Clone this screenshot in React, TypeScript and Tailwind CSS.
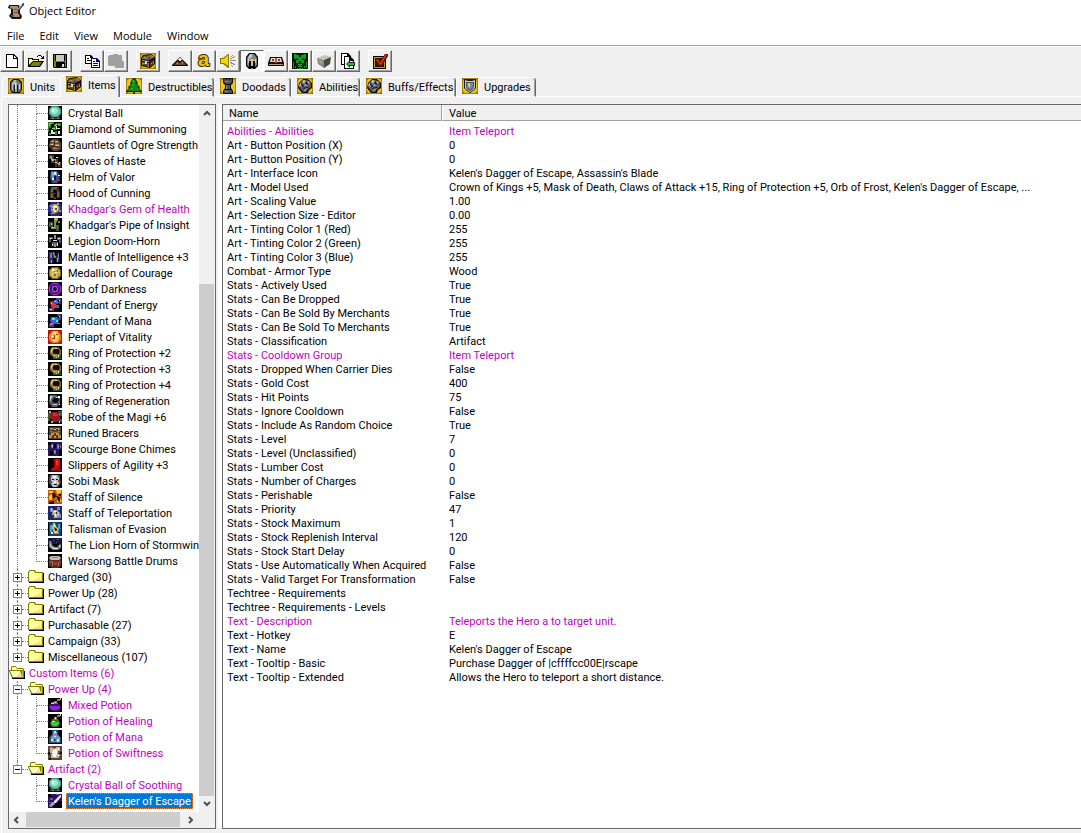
import { useState, type ReactNode } from "react";
import clsx from "clsx";

type Layer = [fill: string, d: string];

// 14x14 item icons, painted back to front on black
const art: Record<string, Layer[]> = {
  ball: [
    ["#24402c", "M2 10h10v3H2z"],
    ["#3d9c84", "M4 0h6l3 3v5l-3 3H4L1 8V3z"],
    ["#6fc9ae", "M4 1h5l3 3v3l-3 3H5L2 7V3z"],
    ["#a4e4cc", "M4 2h4l2 2v2L7 8H5L3 6V4z"],
    ["#d8fcf0", "M4 3h3v1H6v2H4z"],
    ["#a8843c", "M4 12h2v1H4zM9 12h2v1H9z"],
  ],
  diamond: [
    ["#2b7d1e", "M0 0h6v2H3v4H1v4H0zM9 1h4v3h-3zM5 5h4v3H5z"],
    ["#7be05a", "M1 1h3v1H2v2H1zM10 2h2v1h-2zM4 6h3v1H4zM6 3l3-2v2L7 5z"],
    ["#d8f0d0", "M3 8h2v2h2v2H3zM8 4h1v2h3v1H8zM10 9h2v3h-2z"],
    ["#5a6a58", "M7 9h2v4H7zM1 11h2v2H1z"],
  ],
  gauntlet: [
    ["#5b4334", "M2 2l3-1h5l3 4v6l-3 2H5L1 8z"],
    ["#a68468", "M3 3l3-1v2H3zM7 3h3v2H7zM2 6l4-1v2H2zM7 6h4v2H7zM5 10h5v1H5z"],
    ["#d5b899", "M4 3h1v1H4zM8 3h1v1H8zM3 6h2v1H3zM8 7h3v1H8zM6 9h3v1H6z"],
    ["#2c1c14", "M3 8l7 1v1L4 9zM6 4h1v3H6z"],
  ],
  gloves: [
    ["#4a3a2c", "M1 1h5v4h4v3h3v5H7V9H3V5H1z"],
    ["#a89878", "M2 2h2v2H2zM5 5h3v2H5zM9 9h3v2H9z"],
    ["#e8e0c8", "M3 4h1v1h1v2H4zM7 8h2v1H7zM11 8h1v1h-1zM8 3h2v1H8z"],
    ["#18100c", "M6 6h1v2H6zM9 10h1v3H9z"],
  ],
  helm: [
    ["#33508e", "M3 1h6l2 3v6l-2 3H4L2 8z"],
    ["#7fa2dc", "M3 2h3v7H4zM8 2h1v4H8z"],
    ["#e8ecf6", "M6 2h2v3H6zM4 8h2v2H4zM10 5h2v1h-2z"],
    ["#c02828", "M9 7h3v1H9zM9 9h3v2H9zM7 11h2v2H7z"],
    ["#0c1430", "M6 6h2v4H6z"],
  ],
  hood: [
    ["#3e3428", "M3 1h7l2 4v7H2V5z"],
    ["#78644a", "M4 1h5v2H5v3H3V4zM3 8h2v4H3zM9 6h2v5H9z"],
    ["#0b0806", "M6 4h2l1 2v5H6L5 7z"],
    ["#a02a1c", "M5 7h2v1H5zM9 4h1v2H9zM6 12h2v1H6z"],
  ],
  gem: [
    ["#1d2c8c", "M3 0h8l3 4v6l-3 4H3l-3-4V4z"],
    ["#7d90f0", "M2 3h2v2H2zM9 1h2v2H9zM11 8h2v2h-2zM3 11h3v1H3z"],
    ["#b89838", "M5 2h4l3 4-2 4-4 2-3-3V5z"],
    ["#f4e088", "M5 4l3-1 2 2v3L7 10 5 8z"],
    ["#ffffff", "M6 4h2v1H6zM5 7h1v1H5zM9 7h1v1H9zM6 9h2v1H6z"],
    ["#3848b8", "M7 6h2v2H7zM4 6h1v1H4z"],
  ],
  pipe: [
    ["#2f5a34", "M1 4h4v5H1zM8 7h3v6H8z"],
    ["#9c8458", "M6 0h4v2L8 5v5H6zM3 9h5v2H3z"],
    ["#d8c8a0", "M7 1h2v1H7zM4 9h2v1H4zM3 5h1v2H3z"],
    ["#4f9c5a", "M10 3h2v2h-2zM9 8h1v3H9z"],
  ],
  doom: [
    ["#55585e", "M1 3h4v2H3v3H1zM9 3h4v6h-2V6H9zM4 8h6v4H4z"],
    ["#dfe3ea", "M2 4h2v1H2zM5 6h4v1H5zM10 4h2v1h-2zM4 10h1v2H4zM9 9h1v3H9z"],
    ["#8b9099", "M6 1h2v4H6zM6 10h2v3H6z"],
  ],
  mantle: [
    ["#262c5e", "M1 2h5l2 4 3-4 1 10H8V8H5v5H1z"],
    ["#6878bc", "M2 3h2v5H2zM10 3h1v6h-1zM6 6h2v2H6z"],
    ["#c8a860", "M5 2h1l1 5H6zM9 8h1v4H9zM3 10h1v3H3z"],
  ],
  medal: [
    ["#7d6420", "M4 1h6l3 3v6l-3 3H4l-3-3V4z"],
    ["#d4b850", "M4 2h5l3 3v4l-3 3H5L2 9V5z"],
    ["#fbf0a8", "M4 3h3v2H4zM7 6h2v1H7zM4 8h1v1H4z"],
    ["#7d6420", "M6 5h1v1H6zM9 4h1v2H9zM6 8h2v2H6zM10 8h1v1h-1z"],
  ],
  orb: [
    ["#3c0c5c", "M4 0h6l4 4v6l-4 4H4l-4-4V4z"],
    ["#9a3cd0", "M5 1h4l4 4v4l-4 4H5L1 9V5z"],
    ["#4c1474", "M5 2h4l3 3v4l-3 3H5L2 9V5z"],
    ["#a850dc", "M5 4h4l1 2v2l-1 2H5L4 8V6z"],
    ["#1a0530", "M6 5h2l1 2-1 2H6L5 7z"],
  ],
  energy: [
    ["#47406c", "M8 0h5v6h-2V2H8zM1 10h5v3H1z"],
    ["#e0304c", "M2 4l3-1 4 4-1 3-4 1z"],
    ["#3c74f0", "M6 2h3l2 3-2 1-3-2zM9 7h2v3H8z"],
    ["#ffd0e0", "M3 5h1v1H3zM7 3h1v1H7zM11 2h1v1h-1zM2 11h2v1H2z"],
  ],
  mana: [
    ["#47407c", "M9 0h4v6h-2V2H9zM1 10h5v3H1z"],
    ["#3468d8", "M3 3h6l2 2-1 5H5L2 7z"],
    ["#56d8e8", "M4 4h3v2H4zM8 6h2v2H8z"],
    ["#d85cd0", "M2 9h3v2H2zM10 9h2v1h-2z"],
    ["#e8f8ff", "M5 4h1v1H5zM11 2h1v1h-1z"],
  ],
  periapt: [
    ["#b01808", "M0 0h14v14H0z"],
    ["#e87820", "M4 1h6l3 4v5l-3 3H4l-3-3V5z"],
    ["#fcb848", "M5 1h4l2 4v4l-2 3H5L3 9V5z"],
    ["#ffe898", "M5 2h3v2H5zM3 6h3v1H3zM8 6h2v2H8zM5 10h4v1H5z"],
    ["#a03808", "M6 5h1v4H6zM8 4h2v1H8zM4 8h2v1H4z"],
  ],
  ring: [
    ["#25502c", "M7 9h6v4H5v-2h2z"],
    ["#8c7438", "M4 1h6l3 3v4l-3 4H6L2 8V4z"],
    ["#d8c078", "M4 2h5v1H6L4 5v2L3 6V4zM5 9h4v1H6z"],
    ["#120c04", "M6 3h4l2 2-1 3H7L5 7V4z"],
    ["#c8d8c0", "M10 9h1v2h-1zM8 11h1v1H8z"],
  ],
  regen: [
    ["#5c5e62", "M2 1h6l4 3v6l-3 3H4L1 8z"],
    ["#c4c8cc", "M2 2h3L3 5v2H2zM8 3h3v1H8zM5 10h4v1H5z"],
    ["#08080a", "M6 4h4l1 2-2 3H6L4 7z"],
    ["#ffffff", "M2 3h1v1H2zM10 2h2v2h-2zM11 10h1v1h-1z"],
  ],
  robe: [
    ["#1f6c24", "M0 3h4v3H2v5H0zM10 1h4v5h-3zM10 9h4v3h-4z"],
    ["#9c1420", "M4 2h6l2 4v3l-3 3H5L2 8V5z"],
    ["#cc3038", "M5 3h3l2 2-1 1H5z"],
    ["#d0b850", "M1 1h2v2H1zM3 11h2v2H3zM11 11h1v2h-1zM11 4h1v1h-1z"],
  ],
  bracer: [
    ["#4c3c2a", "M1 1h12v12H1z"],
    ["#a88c60", "M2 2h4v1H2zM8 2h4v1H8zM2 5l5 1 5-1v1L7 7 2 6zM1 9h3v3H1zM10 9h3v3h-3z"],
    ["#ec8c24", "M3 7h3v2H3zM8 7h3v2H8zM6 10h2v2H6z"],
    ["#d0ccc0", "M6 3h2v1H6zM3 3h1v1H3zM10 3h1v1h-1z"],
  ],
  chimes: [
    ["#221c50", "M0 0h14v14H0z"],
    ["#05040c", "M0 0h3v3H0zM6 2h2v4H6zM11 8h3v6h-3zM2 9h3v4H2z"],
    ["#7068b8", "M3 2h2v4H3zM9 2h2v5H9zM6 8h2v4H6zM12 3h1v3h-1z"],
    ["#d4d0f4", "M4 3h1v2H4zM10 4h1v1h-1zM6 9h1v1H6z"],
  ],
  boot: [
    ["#0c0000", "M0 0h14v14H0z"],
    ["#dc0404", "M6 1h6v8l1 4H3v-2l3-2z"],
    ["#7c0000", "M6 3h1v6H6zM10 10h2v1h-2zM4 12h8v1H4z"],
    ["#ff2c20", "M8 2h2v5H8z"],
  ],
  mask: [
    ["#4c5054", "M2 1h10v3l1 5-3 4H4L1 9V4z"],
    ["#c0c4c8", "M4 1h5l2 3v6l-3 3H5L3 9V4z"],
    ["#f0f4f4", "M5 2h3v2H5zM6 7h2v2H6z"],
    ["#101214", "M4 5h2v1H4zM8 5h2v1H8zM6 10h3v1H6z"],
    ["#d02020", "M3 7h1v2H3zM10 6h1v2h-1z"],
  ],
  silence: [
    ["#b85c08", "M0 0h14v14H0z"],
    ["#fcc830", "M1 1h4v2H1zM8 0h5v3l-4 1zM1 6l3-2v6H1zM9 9h4v3H9z"],
    ["#240c04", "M4 3h3l1 3 4 1v5l-2-1-1-3H5zM1 12l5-1v3H1zM11 4h2v2h-2z"],
    ["#3cb820", "M7 7h2v2H7z"],
    ["#d82c0c", "M5 1h2v2H5zM2 10h4v1H2zM10 6h3v1h-3z"],
  ],
  teleport: [
    ["#1d2468", "M0 0h14v14H0z"],
    ["#7c88c4", "M2 2h3v4H2zM9 1h3v3H9zM10 8h3v4h-3z"],
    ["#bfb8a0", "M5 4h4l3 3-1 2-2 3H6L4 8z"],
    ["#ffffff", "M6 5h2v1H6zM3 3h1v1H3zM7 8h1v2H7z"],
    ["#1d2468", "M8 6h1v2H8zM5 9h1v2H5z"],
  ],
  talisman: [
    ["#0f4470", "M1 0h12v14H1z"],
    ["#48a8dc", "M2 3h2v7H2zM10 2h2v5h-2zM6 10h5v2H6z"],
    ["#e0c060", "M5 1h2l1 3 3 4-2 3H6L4 6z"],
    ["#0c2840", "M6 5l3 2v2H7z"],
    ["#f8f8e8", "M6 3h1v2H6zM7 9h2v1H7zM3 10h2v2H3z"],
  ],
  horn: [
    ["#18183c", "M0 0h14v6H0z"],
    ["#787c88", "M1 3h2l2 5 4 1 3-3h1v4l-3 2H5L1 9z"],
    ["#e4e8ee", "M2 5l1 3 3 2h4v1H5L2 8zM11 7h1v2h-1z"],
    ["#6058a0", "M5 2h1v1H5zM9 1h2v1H9zM8 4h1v1H8z"],
  ],
  drums: [
    ["#5c3020", "M1 3h12v9l-3 2H4l-3-2z"],
    ["#c4bcb4", "M3 2h8l2 2-2 2H3L1 4z"],
    ["#a83c30", "M1 7h3v2H1zM6 8h3v3H6zM11 7h2v2h-2z"],
    ["#8c8078", "M4 3h6v1H4zM4 7h1v5H4zM10 8h1v4h-1z"],
  ],
  mixed: [
    ["#3c1060", "M1 6h11l1 3-2 4H3L1 10z"],
    ["#9024e0", "M2 8h10v2l-2 2H4L2 10z"],
    ["#8c7850", "M6 3h3l1 3H6zM9 1h3v2H9z"],
    ["#dcd4c0", "M3 5l3-1v2H3zM7 4h1v1H7zM12 0h1v2h-1z"],
  ],
  heal: [
    ["#4c5c40", "M4 5h6l2 3-1 4-2 1H4l-2-3z"],
    ["#34d020", "M3 8h8v2l-2 2H5l-2-2z"],
    ["#8c7850", "M6 3h3v3H6zM9 1h3v2H9z"],
    ["#dce4d0", "M4 7h3v1H4zM12 0h1v2h-1zM7 3h1v2H7z"],
  ],
  manapot: [
    ["#2c4c68", "M4 0h6v4l3 4v5H1V8l3-4z"],
    ["#6c9ccc", "M5 2h4v3l3 2v5H3V7l2-2z"],
    ["#cce4f8", "M6 1h2v2H6zM3 9h2v2H3zM9 9h2v3H9zM6 6h2v1H6z"],
    ["#305070", "M6 9h2v2H6z"],
  ],
  swift: [
    ["#58463c", "M0 0h14v14H0z"],
    ["#c4b49c", "M2 1l4 1-1 5H2zM8 1h4v4H8zM3 8h8v4H3z"],
    ["#fffae8", "M5 4l3-2 2 4-2 5H5L4 7zM10 2h1v2h-1zM10 9h2v1h-2z"],
    ["#1c1410", "M0 6h2v3H0zM12 6h2v2h-2zM1 12h2v2H1z"],
  ],
  dagger: [
    ["#2c1058", "M0 0h14v14H0z"],
    ["#05020c", "M7 7h7v7H5zM0 0h3v3H0z"],
    ["#7848c0", "M2 4h3v2H2zM8 0h3v1H8zM1 8h2v1H1z"],
    ["#e4e4f0", "M12 1h1v2l-5 6H6V7z"],
    ["#a0a0b4", "M1 12l3-4h2l1 2-4 3z"],
  ],
};

const stockItems: [string, string][] = [
  ["Crystal Ball", "ball"],
  ["Diamond of Summoning", "diamond"],
  ["Gauntlets of Ogre Strength +3", "gauntlet"],
  ["Gloves of Haste", "gloves"],
  ["Helm of Valor", "helm"],
  ["Hood of Cunning", "hood"],
  ["Khadgar's Gem of Health", "gem"],
  ["Khadgar's Pipe of Insight", "pipe"],
  ["Legion Doom-Horn", "doom"],
  ["Mantle of Intelligence +3", "mantle"],
  ["Medallion of Courage", "medal"],
  ["Orb of Darkness", "orb"],
  ["Pendant of Energy", "energy"],
  ["Pendant of Mana", "mana"],
  ["Periapt of Vitality", "periapt"],
  ["Ring of Protection +2", "ring"],
  ["Ring of Protection +3", "ring"],
  ["Ring of Protection +4", "ring"],
  ["Ring of Regeneration", "regen"],
  ["Robe of the Magi +6", "robe"],
  ["Runed Bracers", "bracer"],
  ["Scourge Bone Chimes", "chimes"],
  ["Slippers of Agility +3", "boot"],
  ["Sobi Mask", "mask"],
  ["Staff of Silence", "silence"],
  ["Staff of Teleportation", "teleport"],
  ["Talisman of Evasion", "talisman"],
  ["The Lion Horn of Stormwind", "horn"],
  ["Warsong Battle Drums", "drums"],
];

const groups = ["Charged (30)", "Power Up (28)", "Artifact (7)", "Purchasable (27)", "Campaign (33)", "Miscellaneous (107)"];

const customPotions: [string, string][] = [
  ["Mixed Potion", "mixed"],
  ["Potion of Healing", "heal"],
  ["Potion of Mana", "manapot"],
  ["Potion of Swiftness", "swift"],
];

const customArtifacts: [string, string][] = [
  ["Crystal Ball of Soothing", "ball"],
  ["Kelen's Dagger of Escape", "dagger"],
];

const fields: [name: string, value: string, changed?: boolean][] = [
  ["Abilities - Abilities", "Item Teleport", true],
  ["Art - Button Position (X)", "0"],
  ["Art - Button Position (Y)", "0"],
  ["Art - Interface Icon", "Kelen's Dagger of Escape, Assassin's Blade"],
  ["Art - Model Used", "Crown of Kings +5, Mask of Death, Claws of Attack +15, Ring of Protection +5, Orb of Frost, Kelen's Dagger of Escape, ..."],
  ["Art - Scaling Value", "1.00"],
  ["Art - Selection Size - Editor", "0.00"],
  ["Art - Tinting Color 1 (Red)", "255"],
  ["Art - Tinting Color 2 (Green)", "255"],
  ["Art - Tinting Color 3 (Blue)", "255"],
  ["Combat - Armor Type", "Wood"],
  ["Stats - Actively Used", "True"],
  ["Stats - Can Be Dropped", "True"],
  ["Stats - Can Be Sold By Merchants", "True"],
  ["Stats - Can Be Sold To Merchants", "True"],
  ["Stats - Classification", "Artifact"],
  ["Stats - Cooldown Group", "Item Teleport", true],
  ["Stats - Dropped When Carrier Dies", "False"],
  ["Stats - Gold Cost", "400"],
  ["Stats - Hit Points", "75"],
  ["Stats - Ignore Cooldown", "False"],
  ["Stats - Include As Random Choice", "True"],
  ["Stats - Level", "7"],
  ["Stats - Level (Unclassified)", "0"],
  ["Stats - Lumber Cost", "0"],
  ["Stats - Number of Charges", "0"],
  ["Stats - Perishable", "False"],
  ["Stats - Priority", "47"],
  ["Stats - Stock Maximum", "1"],
  ["Stats - Stock Replenish Interval", "120"],
  ["Stats - Stock Start Delay", "0"],
  ["Stats - Use Automatically When Acquired", "False"],
  ["Stats - Valid Target For Transformation", "False"],
  ["Techtree - Requirements", ""],
  ["Techtree - Requirements - Levels", ""],
  ["Text - Description", "Teleports the Hero a to target unit.", true],
  ["Text - Hotkey", "E"],
  ["Text - Name", "Kelen's Dagger of Escape"],
  ["Text - Tooltip - Basic", "Purchase Dagger of |cffffcc00E|rscape"],
  ["Text - Tooltip - Extended", "Allows the Hero to teleport a short distance."],
];

const Icon16 = ({ children }: { children: ReactNode }) => (
  <svg className="size-4 shrink-0 overflow-visible" viewBox="0 0 16 16" aria-hidden="true">
    {children}
  </svg>
);

const ItemIcon = ({ name }: { name: string }) => (
  <svg className="size-[14px] shrink-0 bg-black" viewBox="0 0 14 14" aria-hidden="true">
    {art[name].map(([fill, d], i) => (
      <path key={i} fill={fill} d={d} />
    ))}
  </svg>
);

// gold plate behind the tab icons
const Gold = () => (
  <>
    <path fill="#3c2e00" d="M0 0h16v16H0z" />
    <path fill="#a88404" d="M1 0h14l1 1v14l-1 1H1l-1-1V1z" />
    <path fill="#ecc41c" d="M3 1h10l2 2v10l-2 2H3l-2-2V3z" />
  </>
);

const HelmShape = () => (
  <>
    <path fill="#0c0c10" d="M5 1h6l3 3v8l-2 3H4l-2-3V4z" />
    <path fill="#70747c" d="M6 2h4l3 3v7l-2 2h-1V7H6v7H5l-2-2V5z" />
    <path fill="#b4b8bc" d="M6 2h2v3L5 7v5H4V5z" />
    <path fill="#d4d8dc" d="M11 6h1v5h-1z" />
    <path fill="#101014" d="M6 7h4v8H6z" />
    <path fill="#a8acb0" d="M7 4h2v10H7z" />
    <path fill="#e4e8ec" d="M7 5h1v6H7z" />
  </>
);

const ChestShape = () => (
  <>
    <path fill="#100a04" d="M1 5l2-3 8-1 4 3v7l-5 4-9-2z" />
    <path fill="#74706c" d="M2 5l2-2 4 1 1 3-7-1z" />
    <path fill="#8c5c34" d="M5 3l5-1 4 2-4 3-1-2z" />
    <path fill="#a0a09c" d="M10 2h1l3 2-1 1zM2 7l7 1v1L2 8z" />
    <path fill="#6c4020" d="M2 9l7 1v4l-7-2z" />
    <path fill="#54341c" d="M10 9l4-2v4l-4 3z" />
    <path fill="#888480" d="M2 9h1v3H2zM8 10h1v4H8zM13 8h1v3h-1z" />
    <path fill="#d8d8d0" d="M5 8h2v3H5z" />
    <path fill="#c08850" d="M3 10h2v1H3zM11 10h1v1h-1zM4 4h2v1H4z" />
  </>
);

const FistShape = () => (
  <>
    <path fill="#101010" d="M2 5l4-4h5l4 4v5l-3 2-1 3H5l-4-5z" />
    <path fill="#54585c" d="M3 5l3-3h4l4 3v4l-4 3-1 2H6l-4-5z" />
    <path fill="#a4a8ac" d="M6 2h2l1 2-2 2-2-2zM10 3h2l1 2-2 1zM3 5h1l2 2-1 2-3-1zM8 6l3 1-1 1H7z" />
    <path fill="#d0d4d8" d="M6 3h1v1H6zM10 4h1v1h-1zM3 6h1v1H3z" />
    <path fill="#141618" d="M4 5l3 3-1 1-2-2zM8 5l2-2 1 3-1 1zM6 10l5-1v1l-4 1z" />
    <path fill="#84888c" d="M7 11l4-1-2 3H7z" />
  </>
);

const tabs: { label: string; width: string; icon: ReactNode }[] = [
  { label: "Units", width: "w-[58px]", icon: <HelmShape /> },
  { label: "Items", width: "w-[60px]", icon: <ChestShape /> },
  {
    label: "Destructibles",
    width: "w-[94px]",
    icon: (
      <>
        <path fill="#042c08" d="M7 0h2l3 5-1 1 3 3-1 1 3 3v1H0v-1l3-3-1-1 3-3-1-1z" />
        <path fill="#108c20" d="M7 1h1l3 4H9l4 4h-2l4 4H1l4-4H3l4-4H5z" />
        <path fill="#38c848" d="M7 2h1v2H7zM6 6h2v1H6zM5 10h2v1H5z" />
        <path fill="#4c2808" d="M7 13h2v3H7z" />
      </>
    ),
  },
  {
    label: "Doodads",
    width: "w-[77px]",
    icon: (
      <>
        <path fill="#101010" d="M3 0h10v5l-2 2v3l2 3v3H3v-3l2-3V7L3 5z" />
        <path fill="#505050" d="M4 1h2v1h1V1h2v1h1V1h2v3l-2 2H6L4 4zM6 7h4v4H6zM5 12h6l1 1v2H4v-2z" />
        <path fill="#8c8c8c" d="M5 3h4v1H5zM6 7h1v4H6zM5 13h3v1H5z" />
      </>
    ),
  },
  { label: "Abilities", width: "w-[69px]", icon: <FistShape /> },
  { label: "Buffs/Effects", width: "w-[96px]", icon: <FistShape /> },
  {
    label: "Upgrades",
    width: "w-[80px]",
    icon: (
      <>
        <path fill="#181818" d="M2 1h12v9l-3 3-3 2-3-2-3-3z" />
        <path fill="#c4c8cc" d="M3 2l3 1h4l3-1v8l-3 3-2 1-2-1-3-3z" />
        <path fill="#4c5054" d="M4 4h8v5l-2 3-2 1-2-1-2-3z" />
        <path fill="#84888c" d="M5 5h6v4l-3 3-3-3z" />
        <path fill="#c0c4c8" d="M6 5h2v5L6 8z" />
      </>
    ),
  },
];

const toolGroups: { label: string; icon: ReactNode; pressed?: boolean; disabled?: boolean }[][] = [
  [
    {
      label: "New",
      icon: (
        <>
          <path fill="#000" d="M2 1h8l4 4v10H2z" />
          <path fill="#fff" d="M3 2h6v4h4v8H3z" />
          <path fill="#fff" d="M10 3h1v1h1v1h-2z" />
        </>
      ),
    },
    {
      label: "Open",
      icon: (
        <>
          <path fill="#000" d="M10 2h3v1h-3zM9 3h1v1H9zM13 3h1v1h1V3h1v3h-3V5h1V4h-1zM0 5h5v1h6v2h5l-4 6H0z" />
          <path fill="#ffff9c" d="M1 6h3v1h6v1H5l-4 4z" />
          <path fill="#808000" d="M5 9h9l-3 4H2z" />
        </>
      ),
    },
    {
      label: "Save",
      icon: (
        <>
          <path fill="#000" d="M1 1h14v14H2l-1-1z" />
          <path fill="#808000" d="M2 2h12v12H2z" />
          <path fill="#c8c8c8" d="M4 2h8v6H4z" />
          <path fill="#000" d="M4 9h9v6H4zM3 2h1v6H3zM12 2h1v6h-1z" />
          <path fill="#d8d8d8" d="M10 11h2v3h-2z" />
        </>
      ),
    },
  ],
  [
    {
      label: "Copy",
      icon: (
        <>
          <path fill="#000" d="M1 2h6l2 2v7H1z" />
          <path fill="#fff" d="M2 3h4v2h2v5H2z" />
          <path fill="#000" d="M3 5h2v1H3zM3 7h4v1H3z" />
          <path fill="#000080" d="M7 5h6l3 3v7H7z" />
          <path fill="#fff" d="M8 6h4v3h3v5H8z" />
          <path fill="#000080" d="M9 8h2v1H9zM9 10h5v1H9zM9 12h5v1H9z" />
        </>
      ),
    },
    {
      label: "Paste",
      disabled: true,
      icon: <path fill="#a0a0a0" d="M2 2h3V1h5v1h4v5l2 2v6H7v-2H1L0 12V3z" />,
    },
  ],
  [{ label: "Custom item", icon: <><Gold /><ChestShape /></> }],
  [
    {
      label: "Terrain",
      icon: (
        <>
          <path fill="#0c0804" d="M0 12l8-8 8 8v1H0z" />
          <path fill="#6c4828" d="M2 12l4-4 2 2 2-3 4 5z" />
          <path fill="#e8dccc" d="M7 5h2v1h1v1H9v1H7V7H6V6h1z" />
          <path fill="#a88868" d="M4 10h2v1H4zM10 9h1v2h-1z" />
        </>
      ),
    },
    {
      label: "Triggers",
      icon: (
        <text x="2" y="13" fontFamily="Liberation Sans" fontSize="20" fontWeight="700" fill="#f0c400" stroke="#3c2c00" strokeWidth="2" paintOrder="stroke">
          a
        </text>
      ),
    },
    {
      label: "Sounds",
      icon: (
        <>
          <path fill="#8c7400" d="M0 5h3l5-4h1v14H8l-5-4H0z" />
          <path fill="#f4d800" d="M1 6h3l4-4v11l-4-3H1z" />
          <path fill="#8c8c8c" d="M10 7h6v1h-6zM10 5h2V4h2V3h1v1h-1v1h-2v1h-2zM10 9h2v1h2v1h1v1h-2v-1h-2v-1h-1zM11 3h1V2h1v1h-1v1h-1zM11 12h1v1h1v1h-1v-1h-1z" />
        </>
      ),
    },
    {
      label: "Objects",
      pressed: true,
      icon: (
        <>
          <path fill="#08080c" d="M5 0h6l3 4v9l-3 3H9l-1-1-1 1H5l-3-3V4z" />
          <path fill="#7c8494" d="M6 1h4l3 4v7l-2 2V7L8 5 5 7v7l-2-2V5z" />
          <path fill="#c4ccd8" d="M6 1h2v3L5 6v4H4V5zM11 6h1v4h-1z" />
          <path fill="#d8c070" d="M5 7l3-2 3 2v1H9v5H7V8H5z" />
          <path fill="#08080c" d="M6 9h1v5H6zM9 9h1v5H9z" />
        </>
      ),
    },
    {
      label: "Campaigns",
      icon: (
        <>
          <path fill="#100c08" d="M2 4h12l2 6v3H0v-3z" />
          <path fill="#e4dcc8" d="M3 5h4l1 1 1-1h4l1 4H2z" />
          <path fill="#b09878" d="M1 11h14v1H1z" />
          <path fill="#8c6c48" d="M7 5h2v5H7z" />
          <path fill="#b82818" d="M4 6h2v2H4zM10 6h2v2h-2z" />
        </>
      ),
    },
    {
      label: "AI",
      icon: (
        <>
          <path fill="#041804" d="M0 0h16v16H0z" />
          <path fill="#0c9c20" d="M2 1h2l1 1h6l1-1h2v4l-2 2v3l-2 1v3H6v-3l-2-1V7L2 5z" />
          <path fill="#022804" d="M4 5l3 2H4zM12 5L9 7h3zM7 8h2v2H7zM5 10h6v1H5zM6 12h1v1H6zM9 12h1v1H9zM7 2h2v2H7z" />
          <path fill="#0c9c20" d="M1 9h1v6H1zM14 9h1v6h-1zM3 13h1v2H3zM12 13h1v2h-1zM5 15h1v1H5zM7 15h2v1H7zM10 15h1v1h-1z" />
        </>
      ),
    },
    {
      label: "Object manager",
      icon: (
        <>
          <path fill="#c8c4bc" d="M1 5l8-3 6 2-7 3z" />
          <path fill="#8c8880" d="M1 5l7 2v8l-6-4z" />
          <path fill="#4c4840" d="M8 7l7-3-1 7-6 4z" />
          <path fill="#a8a49c" d="M3 7l3 1v3l-2-1z" />
        </>
      ),
    },
    {
      label: "Import",
      icon: (
        <>
          <path fill="#000" d="M1 0h7l3 3v9H1z" />
          <path fill="#fff" d="M2 1h5v3h3v7H2z" />
          <path fill="#000" d="M4 3h6l4 4v9H4z" />
          <path fill="#fff" d="M5 4h4v4h4v7H5z" />
          <path fill="#0c3c10" d="M6 11l4-4v2h5v4h-5v2z" />
          <path fill="#20c038" d="M7 11l2-2v1h5v2H9v1z" />
        </>
      ),
    },
  ],
  [
    {
      label: "Test map",
      icon: (
        <>
          <path fill="#000" d="M1 3h13v13H1z" />
          <path fill="#c89c10" d="M2 4h11v11H2z" />
          <path fill="#201400" d="M3 5h9v9H3z" />
          <path fill="#5c0c00" d="M3 6l3-1 2 3 5-7h3v2l-6 10H7z" />
          <path fill="#dc3410" d="M4 7l2-1 2 4 5-8h2L9 12H8z" />
        </>
      ),
    },
  ],
];

const Folder = ({ open }: { open?: boolean }) => (
  <Icon16>
    {open ? (
      <>
        <path fill="#000" d="M3 13h12V6h1v8H3z" />
        <path fill="#808000" d="M2 2l1-1h4l1 2h6l1 1v9H3L0 6V5h2z" />
        <path fill="#ffff9c" d="M3 2h4l1 2h6v1H3z" />
        <path fill="#c8b860" d="M13 6h1v6h-1z" />
        <path fill="#ffffb8" d="M1 6h10l2 6H4z" />
        <path fill="#fcdc94" d="M9 9h1v-1h1v2h1v2H7v-1h2z" />
      </>
    ) : (
      <>
        <path fill="#000" d="M1 13h14V4h1v10H1z" />
        <path fill="#808000" d="M0 3l2-2h5l1 2h7v10H0z" />
        <path fill="#ffff9c" d="M1 4l1-2h4l1 2h7v8H1z" />
        <path fill="#fcd490" d="M11 6h1v1h-1zM13 6h1v6H6v-1h1v-1h1v1h1V9h1v2h1V8h1v2h1z" />
      </>
    )}
  </Icon16>
);

const Expander = ({ open, last }: { open?: boolean; last?: boolean }) => (
  <span className="flex w-[19px] shrink-0 items-center pl-1">
    <span className="flex flex-col items-center">
      <span className="h-1 border-l border-dotted border-[#808080]" />
      <button type="button" aria-label={open ? "Collapse" : "Expand"} className="size-[9px] border border-[#808080] bg-white">
        <svg className="block size-[7px]" viewBox="0 0 7 7" aria-hidden="true">
          <path d={open ? "M1 3h5v1H1z" : "M1 3h5v1H1zM3 1h1v5H3z"} />
        </svg>
      </button>
      <span className={clsx("h-[3px] border-l border-dotted", last ? "border-transparent" : "border-[#808080]")} />
    </span>
    <span className="mt-px flex-1 border-t border-dotted border-[#808080]" />
  </span>
);

const Leaf = ({ name, icon, last, rail = true, changed, selected, onSelect }: {
  name: string;
  icon: string;
  last?: boolean;
  rail?: boolean;
  changed?: boolean;
  selected: boolean;
  onSelect: (name: string) => void;
}) => (
  <li role="treeitem" aria-selected={selected} className="flex h-4 items-center pl-2">
    <span className={clsx("h-4 w-[19px] shrink-0 border-l border-dotted", rail ? "border-[#808080]" : "border-transparent")} />
    <span className="flex h-4 w-3 shrink-0 flex-col">
      <span className="h-[9px] border-b border-l border-dotted border-[#808080]" />
      {!last && <span className="flex-1 border-l border-dotted border-[#808080]" />}
    </span>
    <ItemIcon name={icon} />
    <button
      type="button"
      onClick={() => onSelect(name)}
      className={clsx(
        "ml-1 h-4 border px-px leading-4 whitespace-nowrap",
        selected ? "border-dotted border-[#ff8728] bg-[#0078d7] text-white" : "border-transparent",
        !selected && changed && "text-[#c000c0]",
      )}
    >
      {name}
    </button>
  </li>
);

const Group = ({ label, open, last, changed, children }: {
  label: string;
  open?: boolean;
  last?: boolean;
  changed?: boolean;
  children?: ReactNode;
}) => (
  <li role="treeitem" aria-expanded={!!open}>
    <div className="flex h-4 items-center">
      <Expander open={open} last={last} />
      <Folder open={open} />
      <span className={clsx("ml-1 pt-0.5 whitespace-nowrap", changed && "text-[#c000c0]")}>{label}</span>
    </div>
    {children && <ul role="group">{children}</ul>}
  </li>
);

const arrows = {
  up: "M1 6l3-3 3 3",
  down: "M1 2l3 3 3-3",
  left: "M5 1L2 4l3 3",
  right: "M3 1l3 3-3 3",
};

const ScrollArrow = ({ dir }: { dir: keyof typeof arrows }) => (
  <button type="button" aria-label={`Scroll ${dir}`} className="flex size-4 shrink-0 items-center justify-center">
    <svg className="size-2" viewBox="0 0 8 8" fill="none" stroke="#505050" strokeWidth="2" aria-hidden="true">
      <path d={arrows[dir]} />
    </svg>
  </button>
);

export default function App() {
  const [selected, setSelected] = useState("Kelen's Dagger of Escape");
  const [tab, setTab] = useState("Items");

  return (
    <div className="flex h-screen flex-col overflow-hidden bg-[#f0f0f0] font-['Roboto',sans-serif] text-[11px] leading-4 text-black">
      <header className="bg-white font-['Open_Sans',sans-serif]">
        <div className="flex h-[22px] items-center pl-2">
          <Icon16>
            <path fill="#1c1410" d="M1 2h9l2 1v7l2 3-1 3H4l-3-3 2-3V6L0 5z" />
            <path fill="#a88c70" d="M2 3h8v7l2 3-1 1H5V6L2 5z" />
            <path fill="#6c543c" d="M6 6h3v1H6zM6 9h4v1H6zM3 12h3v2H4z" />
            <path fill="#38485c" d="M15 0h1v2l-5 6H9l1-2z" />
            <path fill="#c4d0dc" d="M13 1h1v1l-3 4h-1z" />
          </Icon16>
          <h1 className="ml-[5px] text-[11px]">Object Editor</h1>
        </div>
        <nav className="flex h-6 items-center gap-[15px] border-b border-[#a0a0a0] pt-[5px] pl-[7px]">
          {["File", "Edit", "View", "Module", "Window"].map((m) => (
            <button key={m} type="button">{m}</button>
          ))}
        </nav>
      </header>

      <div role="toolbar" className="flex gap-2 border-t border-white pt-[3px]">
        {toolGroups.map((group, i) => (
          <div key={i} className="flex">
            {group.map((tool) => (
              <button
                key={tool.label}
                type="button"
                aria-label={tool.label}
                aria-pressed={tool.pressed}
                disabled={tool.disabled}
                className={clsx(
                  "flex h-[22px] w-6 items-center justify-center border",
                  tool.pressed
                    ? "border-t-[#696969] border-r-white border-b-white border-l-[#696969] bg-[#f8f8f8]"
                    : "border-t-white border-r-[#696969] border-b-[#696969] border-l-white shadow-[inset_-1px_-1px_0_#a0a0a0]",
                )}
              >
                <Icon16>{tool.icon}</Icon16>
              </button>
            ))}
          </div>
        ))}
      </div>

      <div role="tablist" className="mt-[3px] flex items-end pl-0.5">
        {tabs.map(({ label, width, icon }) => (
          <button
            key={label}
            type="button"
            role="tab"
            aria-selected={tab === label}
            onClick={() => setTab(label)}
            className={clsx(
              "flex shrink-0 gap-[6px] rounded-t-sm border-t border-l border-white pl-[5px]",
              width,
              tab === label ? "h-[22px]" : "h-5 border-b",
              label === "Units" ? "border-r-0" : "border-r border-r-[#696969] shadow-[inset_-1px_0_0_#a0a0a0]",
            )}
          >
            <Icon16><Gold />{icon}</Icon16>
            <span className="pt-0.5">{label}</span>
          </button>
        ))}
        <span className="flex-1 border-b border-white" />
      </div>

      <main className="ml-px flex min-h-0 flex-1 border-l border-white pt-[7px] pb-1 pl-[6px]">
        <aside className="flex w-[208px] shrink-0 flex-col border border-[#696969]">
          <div className="flex min-h-0 flex-1">
            <ul role="tree" aria-label="Items" className="min-w-0 flex-1 overflow-hidden bg-white">
              {stockItems.map(([name, icon], i) => (
                <Leaf
                  key={name}
                  name={name}
                  icon={icon}
                  last={i === stockItems.length - 1}
                  changed={name === "Khadgar's Gem of Health"}
                  selected={selected === name}
                  onSelect={setSelected}
                />
              ))}
              {groups.map((g, i) => (
                <Group key={g} label={g} last={i === groups.length - 1} />
              ))}
              <li role="treeitem" className="flex h-4 items-center text-[#c000c0]">
                <Folder open />
                <span className="ml-1 pt-0.5">Custom Items (6)</span>
              </li>
              <Group label="Power Up (4)" open changed>
                {customPotions.map(([name, icon], i) => (
                  <Leaf key={name} name={name} icon={icon} changed last={i === customPotions.length - 1} selected={selected === name} onSelect={setSelected} />
                ))}
              </Group>
              <Group label="Artifact (2)" open last changed>
                {customArtifacts.map(([name, icon], i) => (
                  <Leaf key={name} name={name} icon={icon} rail={false} changed last={i === customArtifacts.length - 1} selected={selected === name} onSelect={setSelected} />
                ))}
              </Group>
            </ul>
            <div className="flex w-4 flex-col items-center">
              <ScrollArrow dir="up" />
              <span className="grow-[163]" />
              <span className="w-full grow-[510] border-r border-[#f0f0f0] bg-[#cdcdcd]" />
              <ScrollArrow dir="down" />
            </div>
          </div>
          <div className="flex h-4 pr-[17px]">
            <ScrollArrow dir="left" />
            <span className="mb-px ml-px grow-[145] bg-[#cdcdcd]" />
            <span className="grow-[2]" />
            <ScrollArrow dir="right" />
          </div>
        </aside>

        <section className="ml-[6px] min-w-0 flex-1 border-t border-b border-l border-[#696969] bg-white shadow-[-5px_0_0_-1px_#ffffff]">
          <table className="w-full table-fixed border-separate border-spacing-0 text-left">
            <colgroup>
              <col className="w-[219px]" />
              <col />
            </colgroup>
            <thead className="after:block after:h-1 after:content-['']">
              <tr className="bg-[#f0f0f0]">
                <th className="h-4 border-r border-b border-[#a0a0a0] pt-0.5 pb-0 pl-[6px] leading-[13px] font-normal">Name</th>
                <th className="h-4 border-b border-l border-b-[#a0a0a0] border-l-white pt-0.5 pb-0 pl-[6px] leading-[13px] font-normal">Value</th>
              </tr>
            </thead>
            <tbody>
              {fields.map(([name, value, changed]) => (
                <tr key={name} className={clsx("h-[14px] leading-[14px] whitespace-nowrap", changed && "text-[#c000c0]")}>
                  <td className="overflow-hidden py-0 pl-1">{name}</td>
                  <td className="overflow-hidden py-0 pl-[7px]">{value}</td>
                </tr>
              ))}
            </tbody>
          </table>
        </section>
      </main>
    </div>
  );
}
